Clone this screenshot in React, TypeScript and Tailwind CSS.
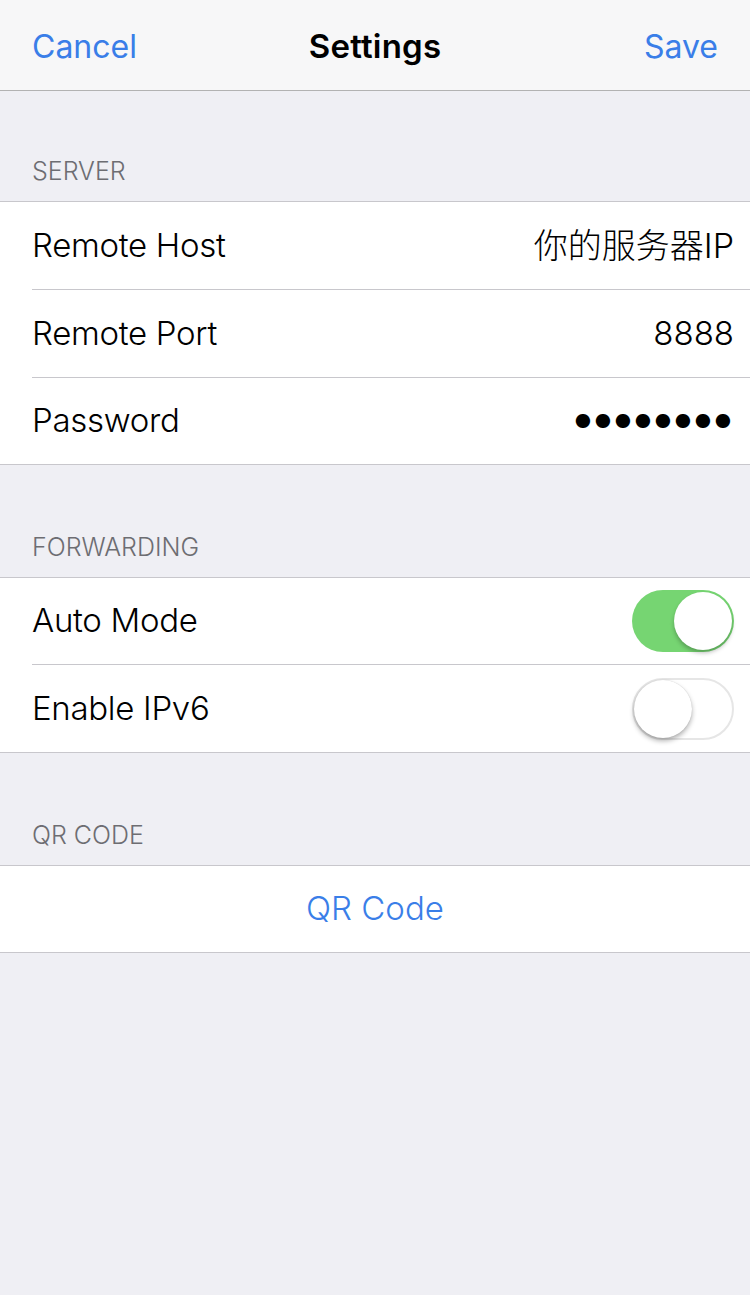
import React from "react";

const font = {
  fontFamily: '"Inter", "Noto Sans CJK SC", sans-serif',
};

type CellProps = {
  label: string;
  children?: React.ReactNode;
  last?: boolean;
  h?: string;
};

const Cell: React.FC<CellProps> = ({ label, children, last, h = "h-[88px]" }) => (
  <div className={`flex items-stretch pl-8 ${h}`}>
    <div
      className={`flex flex-1 items-center justify-between pr-4 ${
        last ? "" : "border-b border-[#c8c7cc]"
      }`}
    >
      <span className="text-[33px] font-light tracking-[-0.3px] text-black">
        {label}
      </span>
      {children}
    </div>
  </div>
);

const SectionHeader: React.FC<{ title: string; first?: boolean }> = ({
  title,
  first,
}) => (
  <div
    className={`flex items-end px-8 pb-[11px] ${first ? "h-[110px]" : "h-[112px]"}`}
  >
    <span className="text-[25px] font-light uppercase text-[#6d6d72]">
      {title}
    </span>
  </div>
);

const Toggle: React.FC<{ on: boolean }> = ({ on }) =>
  on ? (
    <div className="flex h-[62px] w-[102px] items-center justify-end rounded-full bg-[#76d572] p-[2px]">
      <div className="h-[58px] w-[58px] rounded-full bg-white shadow-[0_3px_4px_rgba(0,0,0,0.25)]" />
    </div>
  ) : (
    <div className="flex h-[62px] w-[102px] items-center justify-start rounded-full border-[2px] border-[#e6e6e6] bg-white">
      <div className="h-[58px] w-[58px] rounded-full bg-white shadow-[0_3px_5px_rgba(0,0,0,0.3),0_0_1px_rgba(0,0,0,0.2)]" />
    </div>
  );

const Group: React.FC<{ children: React.ReactNode }> = ({ children }) => (
  <div className="border-y border-[#c8c7cc] bg-white">{children}</div>
);

export default function App() {
  return (
    <div className="min-h-[1295px] w-[750px] bg-[#efeff4]" style={font}>
      <div className="relative flex h-[91px] items-center justify-between border-b border-[#b2b2b2] bg-[#f7f7f8] px-8 pt-[3px]">
        <span className="text-[32px] text-[#3a7ee8]">Cancel</span>
        <span className="absolute left-1/2 -translate-x-1/2 text-[33px] font-semibold tracking-[0.2px] text-black">
          Settings
        </span>
        <span className="text-[32px] text-[#3a7ee8]">Save</span>
      </div>

      <SectionHeader title="Server" first />
      <Group>
        <Cell label="Remote Host">
          <span className="text-[34px] font-light text-black">你的服务器IP</span>
        </Cell>
        <Cell label="Remote Port">
          <span className="text-[33px] font-light text-black">8888</span>
        </Cell>
        <Cell label="Password" last h="h-[86px]">
          <span className="flex pr-[1px] text-black">
            {Array.from({ length: 8 }).map((_, i) => (
              <span key={i} className="w-[20px] text-center text-[19px] leading-none">
                ●
              </span>
            ))}
          </span>
        </Cell>
      </Group>

      <SectionHeader title="Forwarding" />
      <Group>
        <Cell label="Auto Mode" h="h-[87px]">
          <Toggle on />
        </Cell>
        <Cell label="Enable IPv6" last h="h-[87px]">
          <Toggle on={false} />
        </Cell>
      </Group>

      <SectionHeader title="QR Code" />
      <Group>
        <div className="flex h-[86px] items-center justify-center">
          <span className="text-[33px] font-light text-[#3a7ee8]">QR Code</span>
        </div>
      </Group>
    </div>
  );
}
